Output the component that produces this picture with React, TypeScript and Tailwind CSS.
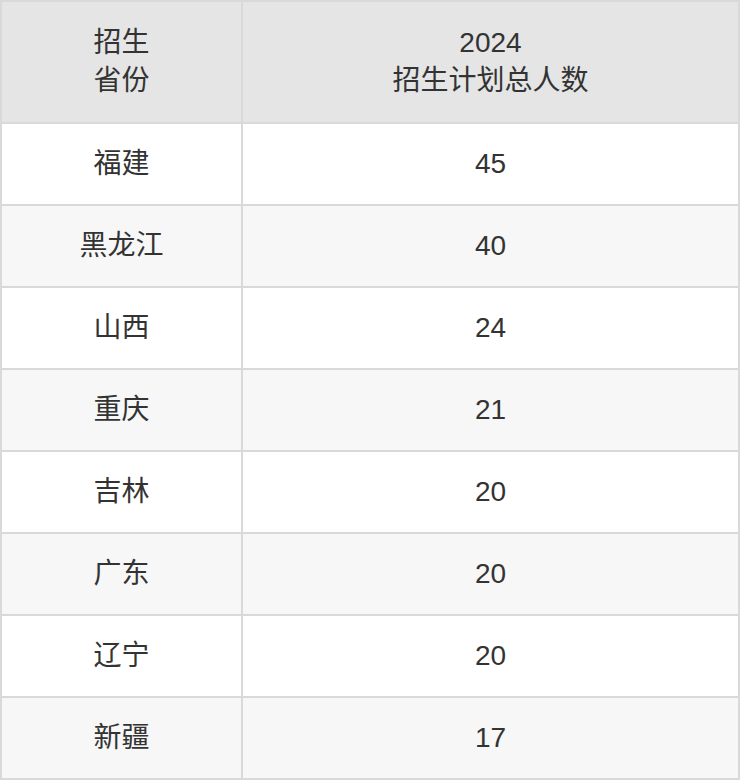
const rows: [string, string][] = [
  ["福建", "45"],
  ["黑龙江", "40"],
  ["山西", "24"],
  ["重庆", "21"],
  ["吉林", "20"],
  ["广东", "20"],
  ["辽宁", "20"],
  ["新疆", "17"],
]

export default function App() {
  return (
    <div
      className="w-[740px] border-2 border-[#d9d9d9] text-[28px] leading-[38px] text-[#333333]"
      style={{ fontFamily: '"Liberation Sans", "Noto Sans CJK SC", sans-serif' }}
    >
      <div className="flex h-[122px] border-b-2 border-[#d9d9d9] bg-[#e5e5e5]">
        <div className="flex w-[241px] flex-col items-center justify-center border-r-2 border-[#d9d9d9] text-center">
          <span>招生</span>
          <span>省份</span>
        </div>
        <div className="flex flex-1 flex-col items-center justify-center text-center">
          <span>2024</span>
          <span>招生计划总人数</span>
        </div>
      </div>
      {rows.map(([province, count], i) => (
        <div
          key={province}
          className={
            (i % 2 === 0 ? "bg-white" : "bg-[#f7f7f7]") +
            (i < rows.length - 1 ? " h-[82px] border-b-2 border-[#d9d9d9]" : " h-[80px]") +
            " flex"
          }
        >
          <div className="flex w-[241px] items-center justify-center border-r-2 border-[#d9d9d9]">
            {province}
          </div>
          <div className="flex flex-1 items-center justify-center">{count}</div>
        </div>
      ))}
    </div>
  )
}
